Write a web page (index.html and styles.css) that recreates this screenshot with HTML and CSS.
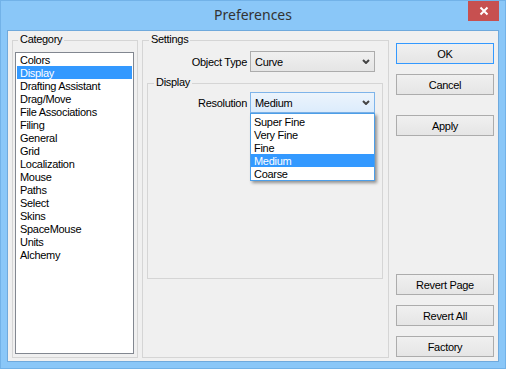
FILE: index.html
```html
<!DOCTYPE html>
<html>
<head>
<meta charset="utf-8">
<title>Preferences</title>
<link rel="stylesheet" href="styles.css">
</head>
<body>
<div class="window">
  <div class="titlebar">
    <div class="tb-spacer"></div>
    <div class="title">Preferences</div>
    <div class="close">
      <svg width="31" height="20" viewBox="0 0 31 20"><path d="M12.5 6.5 L19.5 13.5 M19.5 6.5 L12.5 13.5" stroke="#fff" stroke-width="2" fill="none"/></svg>
    </div>
  </div>
  <div class="client">
    <div class="group category">
      <div class="legend">Category</div>
      <ul class="list">
        <li>Colors</li>
        <li class="sel">Display</li>
        <li>Drafting Assistant</li>
        <li>Drag/Move</li>
        <li>File Associations</li>
        <li>Filing</li>
        <li>General</li>
        <li>Grid</li>
        <li>Localization</li>
        <li>Mouse</li>
        <li>Paths</li>
        <li>Select</li>
        <li>Skins</li>
        <li>SpaceMouse</li>
        <li>Units</li>
        <li>Alchemy</li>
      </ul>
    </div>
    <div class="group settings">
      <div class="legend">Settings</div>
      <div class="row row-object">
        <span class="lbl lbl-object">Object Type</span>
        <div class="combo">
          <span>Curve</span>
          <svg class="chev" width="8" height="5" viewBox="0 0 8 5"><path d="M1 1 L4 4 L7 1" stroke="#444" stroke-width="2" fill="none"/></svg>
        </div>
      </div>
      <div class="group display">
        <div class="legend">Display</div>
        <div class="row row-res">
          <span class="lbl lbl-res">Resolution</span>
          <div class="combo combo-open">
            <span>Medium</span>
            <svg class="chev" width="8" height="5" viewBox="0 0 8 5"><path d="M1 1 L4 4 L7 1" stroke="#444" stroke-width="2" fill="none"/></svg>
            <ul class="dropdown">
              <li>Super Fine</li>
              <li>Very Fine</li>
              <li>Fine</li>
              <li class="sel">Medium</li>
              <li>Coarse</li>
            </ul>
          </div>
        </div>
      </div>
    </div>
    <div class="buttons">
      <button class="btn btn-default">OK</button>
      <button class="btn btn-cancel">Cancel</button>
      <button class="btn btn-apply">Apply</button>
      <button class="btn btn-revert-page">Revert Page</button>
      <button class="btn btn-revert-all">Revert All</button>
      <button class="btn btn-factory">Factory</button>
    </div>
  </div>
</div>
</body>
</html>
```
FILE: styles.css
```css
* { box-sizing: border-box; }
html, body { margin: 0; padding: 0; }
body {
  font-family: "Liberation Sans", Arial, sans-serif;
  font-size: 11px;
  letter-spacing: -0.3px;
  color: #000;
  background: #fff;
}
.window {
  width: 506px;
  height: 369px;
  background: #8ac7f8;
  border: 1px solid #72b2e8;
  display: flex;
  flex-direction: column;
}
.titlebar {
  height: 29px;
  display: grid;
  grid-template-columns: 1fr auto 1fr;
}
.title {
  font-family: "Noto Sans", "Open Sans", sans-serif;
  font-size: 14px;
  letter-spacing: 0;
  color: #333;
  line-height: 19px;
  padding-top: 4px;
  white-space: nowrap;
}
.close {
  justify-self: end;
  margin-right: 6px;
  width: 31px;
  height: 20px;
  background: #c75050;
}
.close svg { display: block; }
.client {
  margin-left: 6px;
  width: 492px;
  height: 332px;
  background: #f0f0f0;
  border: 1px solid #6fa9dc;
  display: flex;
  padding: 9px 4px 3px 4px;
}
.group {
  border: 1px solid #d5d5d5;
  display: flex;
  flex-direction: column;
}
.legend {
  align-self: flex-start;
  margin: -8px 0 0 6px;
  padding: 0 2px;
  background: #f0f0f0;
  line-height: 13px;
  white-space: nowrap;
}
.category {
  width: 126px;
  margin-right: 4px;
}
.category .legend { margin-left: 5px; }
.list {
  margin: 6px 3px 3px 2px;
  flex: 1;
  border: 1px solid #828790;
  background: #fff;
  padding: 0 1px;
  list-style: none;
}
.list li, .dropdown li {
  height: 13px;
  line-height: 15px;
  padding-left: 3px;
  white-space: nowrap;
}
.list li.sel, .dropdown li.sel {
  background: #3399ff;
  color: #fff;
}
.settings {
  width: 247px;
  margin-right: 7px;
}
.row {
  display: flex;
  align-items: center;
}
.row-object { margin-top: 5px; }
.lbl {
  text-align: right;
  margin-right: 3px;
  white-space: nowrap;
}
.lbl-object { width: 104px; }
.lbl-res { width: 99px; }
.combo {
  width: 125px;
  height: 21px;
  border: 1px solid #acacac;
  background: linear-gradient(#f0f0f0, #e5e5e5);
  display: flex;
  align-items: center;
  justify-content: space-between;
  padding: 0 4px 0 4px;
  position: relative;
}
.chev { display: block; }
.combo-open {
  border-color: #7eb4ea;
  background: linear-gradient(#ecf4fc, #dcecfc);
}
.display {
  margin: 11px 5px 0 4px;
  height: 196px;
}
.row-res { margin-top: 3px; }
.dropdown {
  position: absolute;
  left: -1px;
  top: 20px;
  width: 125px;
  height: 68px;
  margin: 0;
  padding: 1px 0 0 0;
  list-style: none;
  background: #fff;
  border: 1px solid #4c9ee8;
  box-shadow: 2px 2px 3px rgba(0, 0, 0, 0.4);
  z-index: 2;
}
.buttons {
  width: 98px;
  display: flex;
  flex-direction: column;
  padding: 3px 0 1px 0;
}
.btn {
  height: 21px;
  margin: 0;
  padding: 0;
  border: 1px solid #acacac;
  background: linear-gradient(#f0f0f0, #e5e5e5);
  font-family: inherit;
  font-size: 11px;
  letter-spacing: inherit;
  color: #000;
  display: flex;
  align-items: center;
  justify-content: center;
}
.btn-default { border-color: #3399ff; }
.btn-cancel { margin-top: 10px; }
.btn-apply { margin-top: 20px; }
.btn-revert-page { margin-top: auto; }
.btn-revert-all, .btn-factory { margin-top: 10px; }
```
